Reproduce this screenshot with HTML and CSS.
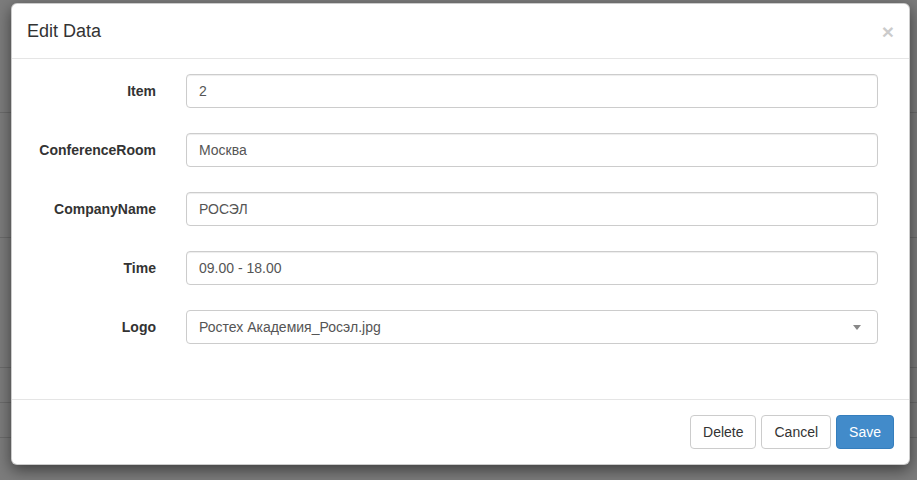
FILE: index.html
```html
<!DOCTYPE html>
<html lang="ru">
<head>
  <meta charset="UTF-8" />
  <meta name="viewport" content="width=device-width, initial-scale=1.0"/>
  <title>Edit Data</title>
  <link rel="stylesheet" href="styles.css">
</head>
<body>

<div class="page">
  <div class="page-row r1"></div>
  <div class="page-row r2"></div>
  <div class="page-row r3"></div>
  <div class="page-row r4"></div>
  <div class="page-row r5"></div>
</div>

<div class="modal">
  <div class="modal-header">
    <h4 class="modal-title">Edit Data</h4>
    <span class="close">&times;</span>
  </div>

  <form class="modal-body">
    <div class="form-group">
      <label for="item">Item</label>
      <input type="text" id="item" value="2" />
    </div>
    <div class="form-group">
      <label for="room">ConferenceRoom</label>
      <input type="text" id="room" value="Москва" />
    </div>
    <div class="form-group">
      <label for="company">CompanyName</label>
      <input type="text" id="company" value="РОСЭЛ" />
    </div>
    <div class="form-group">
      <label for="time">Time</label>
      <input type="text" id="time" value="09.00 - 18.00" />
    </div>
    <div class="form-group">
      <label>Logo</label>
      <div class="select-box">
        <span>Ростех Академия_Росэл.jpg</span>
        <b class="caret"></b>
      </div>
    </div>
  </form>

  <div class="modal-footer">
    <button type="button" class="btn">Delete</button>
    <button type="button" class="btn">Cancel</button>
    <button type="button" class="btn btn-primary">Save</button>
  </div>
</div>

</body>
</html>
```

FILE: styles.css
```css
body {
  font-family: "Liberation Sans", Arial, sans-serif;
  font-size: 14px;
  color: #333;
  background-color: #7c7c7c;
  margin: 0;
  padding: 0;
}
.page {
  height: 480px;
  overflow: hidden;
}
.page-row {
  border-bottom: 1px solid #6b6b6b;
}
.r1 { height: 112px; }
.r2 { height: 124px; }
.r3 { height: 129px; }
.r4 { height: 34px; }
.r5 { height: 34px; }

.modal {
  position: absolute;
  left: 11px;
  top: 3px;
  width: 897px;
  background: white;
  border: 1px solid rgba(0,0,0,0.2);
  border-radius: 6px;
  box-shadow: 0 5px 15px rgba(0,0,0,0.5);
}
.modal-header {
  display: flex;
  justify-content: space-between;
  align-items: flex-start;
  padding: 15px;
  border-bottom: 1px solid #e5e5e5;
}
.modal-title {
  margin: 0;
  font-size: 18px;
  font-weight: normal;
  line-height: 24px;
}
.close {
  font-size: 21px;
  font-weight: bold;
  line-height: 1;
  color: #000;
  opacity: 0.2;
  text-shadow: 0 1px 0 #fff;
  margin-top: 2px;
  margin-right: 0;
}
.modal-body {
  display: flex;
  flex-direction: column;
  gap: 25px;
  padding: 15px 31px 55px 15px;
  margin: 0;
}
.form-group {
  display: grid;
  grid-template-columns: 129px 1fr;
  column-gap: 30px;
  align-items: center;
}
label {
  text-align: right;
  font-weight: bold;
}
input[type="text"], .select-box {
  box-sizing: border-box;
  height: 34px;
  width: 100%;
  padding: 6px 12px;
  font-family: inherit;
  font-size: 14px;
  color: #555;
  border: 1px solid #ccc;
  border-radius: 4px;
  box-shadow: inset 0 1px 1px rgba(0,0,0,0.075);
}
.select-box {
  display: flex;
  justify-content: space-between;
  align-items: center;
  line-height: 20px;
  box-shadow: none;
}
.caret {
  width: 0;
  height: 0;
  border-style: solid;
  border-width: 5px 4px 0 4px;
  border-color: #888 transparent transparent transparent;
  margin-right: 4px;
}
.modal-footer {
  display: flex;
  justify-content: flex-end;
  gap: 5px;
  padding: 15px;
  border-top: 1px solid #e5e5e5;
}
.btn {
  font-family: inherit;
  font-size: 14px;
  line-height: 20px;
  padding: 6px 12px;
  color: #333;
  background-color: white;
  border: 1px solid #ccc;
  border-radius: 4px;
  cursor: pointer;
}
.btn-primary {
  color: white;
  background-color: #428bca;
  border-color: #357ebd;
}
```
